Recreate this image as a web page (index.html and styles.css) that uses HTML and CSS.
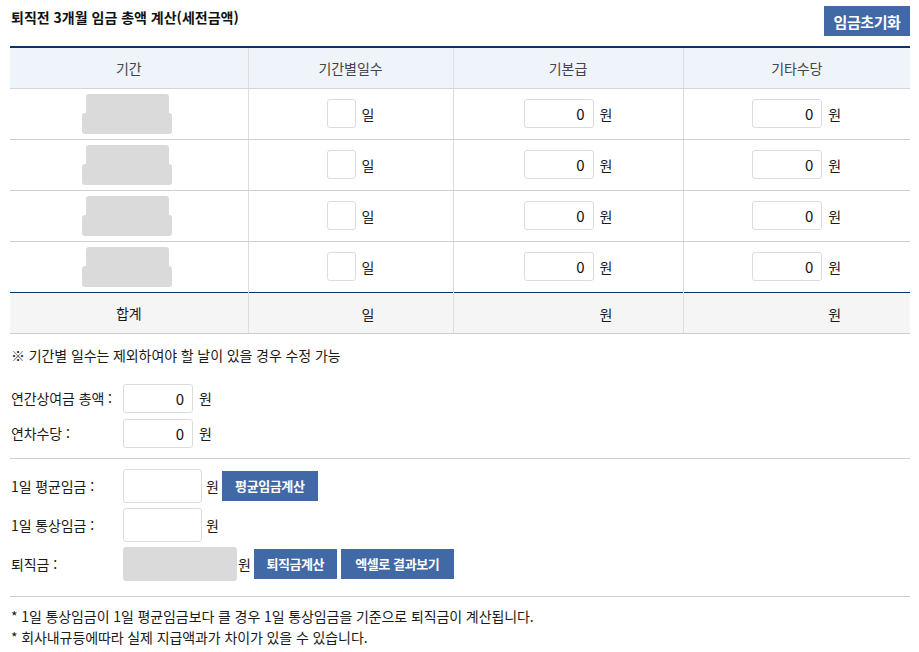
FILE: index.html
```html
<!DOCTYPE html>
<html lang="ko">
<head>
<meta charset="utf-8">
<title>퇴직금 계산</title>
<link rel="stylesheet" href="styles.css">
</head>
<body>
<div class="wrap">
  <div class="head">
    <h2 class="title">퇴직전 3개월 임금 총액 계산(세전금액)</h2>
    <button class="btn btn-reset" type="button">임금초기화</button>
  </div>

  <table class="grid">
    <colgroup>
      <col class="c1"><col class="c2"><col class="c3"><col class="c4">
    </colgroup>
    <thead>
      <tr><th>기간</th><th>기간별일수</th><th>기본급</th><th>기타수당</th></tr>
    </thead>
    <tbody>
      <tr>
        <td><div class="period"><span class="p-top"></span><span class="p-bot"></span></div></td>
        <td><input class="in in-day" type="text"><span class="unit">일</span></td>
        <td><input class="in in-amt" type="text" value="0"><span class="unit">원</span></td>
        <td><input class="in in-amt" type="text" value="0"><span class="unit">원</span></td>
      </tr>
      <tr>
        <td><div class="period"><span class="p-top"></span><span class="p-bot"></span></div></td>
        <td><input class="in in-day" type="text"><span class="unit">일</span></td>
        <td><input class="in in-amt" type="text" value="0"><span class="unit">원</span></td>
        <td><input class="in in-amt" type="text" value="0"><span class="unit">원</span></td>
      </tr>
      <tr>
        <td><div class="period"><span class="p-top"></span><span class="p-bot"></span></div></td>
        <td><input class="in in-day" type="text"><span class="unit">일</span></td>
        <td><input class="in in-amt" type="text" value="0"><span class="unit">원</span></td>
        <td><input class="in in-amt" type="text" value="0"><span class="unit">원</span></td>
      </tr>
      <tr>
        <td><div class="period"><span class="p-top"></span><span class="p-bot"></span></div></td>
        <td><input class="in in-day" type="text"><span class="unit">일</span></td>
        <td><input class="in in-amt" type="text" value="0"><span class="unit">원</span></td>
        <td><input class="in in-amt" type="text" value="0"><span class="unit">원</span></td>
      </tr>
    </tbody>
    <tfoot>
      <tr>
        <td>합계</td>
        <td><span class="sum-val sum-day"></span><span class="unit">일</span></td>
        <td><span class="sum-val sum-amt"></span><span class="unit">원</span></td>
        <td><span class="sum-val sum-amt"></span><span class="unit">원</span></td>
      </tr>
    </tfoot>
  </table>

  <p class="note">※ 기간별 일수는 제외하여야 할 날이 있을 경우 수정 가능</p>

  <div class="form form-a">
    <div class="frow">
      <label class="lbl">연간상여금 총액 :</label>
      <input class="in in-amt" type="text" value="0"><span class="unit">원</span>
    </div>
    <div class="frow">
      <label class="lbl">연차수당 :</label>
      <input class="in in-amt" type="text" value="0"><span class="unit">원</span>
    </div>
  </div>

  <div class="form form-b">
    <div class="frow">
      <label class="lbl">1일 평균임금 :</label>
      <input class="in in-wide" type="text"><span class="unit unit-b">원</span>
      <button class="btn btn-sm btn-avg" type="button">평균임금계산</button>
    </div>
    <div class="frow">
      <label class="lbl">1일 통상임금 :</label>
      <input class="in in-wide" type="text"><span class="unit unit-b">원</span>
    </div>
    <div class="frow">
      <label class="lbl">퇴직금 :</label>
      <input class="in in-result" type="text" disabled><span class="unit unit-c">원</span>
      <button class="btn btn-sm btn-calc" type="button">퇴직금계산</button>
      <button class="btn btn-sm btn-excel" type="button">엑셀로 결과보기</button>
    </div>
  </div>

  <div class="foot-notes">
    <p>* 1일 통상임금이 1일 평균임금보다 클 경우 1일 통상임금을 기준으로 퇴직금이 계산됩니다.</p>
    <p>* 회사내규등에따라 실제 지급액과가 차이가 있을 수 있습니다.</p>
  </div>
</div>
</body>
</html>
```

FILE: styles.css
```css
* { box-sizing: border-box; }
html, body { margin: 0; padding: 0; background: #fff; }
body {
  font-family: "Noto Sans CJK KR", "Noto Sans", sans-serif;
  font-size: 14px;
  color: #1a1a1a;
  letter-spacing: -0.1px;
}
.wrap { width: 900px; margin-left: 10px; }

.head {
  display: flex;
  justify-content: space-between;
  align-items: flex-start;
  height: 46px;
  padding-top: 6px;
}
.title {
  margin: 0;
  padding-left: 1px;
  font-size: 14px;
  font-weight: 700;
  color: #111;
  line-height: 22px;
  letter-spacing: 0;
}
.btn {
  border: 0;
  background: #4169a6;
  color: #fff;
  font-family: inherit;
  font-weight: 700;
  letter-spacing: -0.4px;
  cursor: pointer;
  padding: 0;
}
.btn-reset { width: 86px; height: 30px; font-size: 15px; }

.grid {
  width: 900px;
  border-collapse: collapse;
  table-layout: fixed;
  border-top: 2px solid #0d3563;
}
.c1 { width: 238px; }
.c2 { width: 205px; }
.c3 { width: 230px; }
.c4 { width: 227px; }
.grid th, .grid td {
  text-align: center;
  border-right: 1px solid #ddd;
  padding: 0;
}
.grid th:last-child, .grid td:last-child { border-right: 0; }
.grid thead th {
  height: 41px;
  background: #eff3fa;
  font-weight: 400;
  color: #444;
  border-bottom: 1px solid #d4d4d4;
}
.grid tbody td {
  height: 51px;
  border-bottom: 1px solid #cfcfcf;
}
.grid tbody tr:last-child td { border-bottom: 0; }
.grid tfoot td {
  height: 41px;
  background: #f5f5f5;
  border-top: 1px solid #0d3563;
  border-bottom: 1px solid #cfcfcf;
}
.sum-val { display: inline-block; vertical-align: middle; height: 1px; }
.sum-day { width: 29px; }
.sum-amt { width: 70px; }

.period { display: flex; flex-direction: column; align-items: center; padding-right: 3px; }
.p-top { display: block; width: 83px; height: 20px; background: #dadada; border-radius: 3px 3px 0 0; }
.p-bot { display: block; width: 90px; height: 21px; background: #dadada; border-radius: 3px; margin-top: -1px; }

.in {
  height: 29px;
  border: 1px solid #dcdcdc;
  border-radius: 3px;
  font-family: inherit;
  font-size: 15px;
  text-align: right;
  padding: 0 8px 0 4px;
  color: #111;
  vertical-align: middle;
  background: #fff;
}
.in-day { width: 29px; }
.in-amt { width: 70px; }
.unit { display: inline-block; margin-left: 6px; vertical-align: middle; }

.note { margin: 11px 0 0 1px; line-height: 20px; }

.form { display: flex; flex-direction: column; }
.frow { display: flex; align-items: center; }
.lbl { width: 113px; padding-left: 1px; }
.form-a { padding-top: 19px; padding-bottom: 10px; border-bottom: 1px solid #cfcfcf; gap: 6px; }
.form-b { padding-top: 10px; padding-bottom: 15px; border-bottom: 1px solid #cfcfcf; gap: 5px; }
.in-wide { width: 79px; height: 34px; }
.unit-b { margin-left: 4px; }
.unit-c { margin-left: 1px; }
.in-result { width: 114px; height: 34px; background: #dadada; border-color: #dadada; }
.btn-sm { height: 30px; font-size: 13px; margin-left: 4px; }
.btn-avg { width: 96px; margin-left: 3px; }
.btn-calc { width: 83px; margin-left: 3px; }
.btn-excel { width: 113px; }

.foot-notes { padding-top: 9px; }
.foot-notes p { margin: 0 0 0 1px; line-height: 21px; }
```
